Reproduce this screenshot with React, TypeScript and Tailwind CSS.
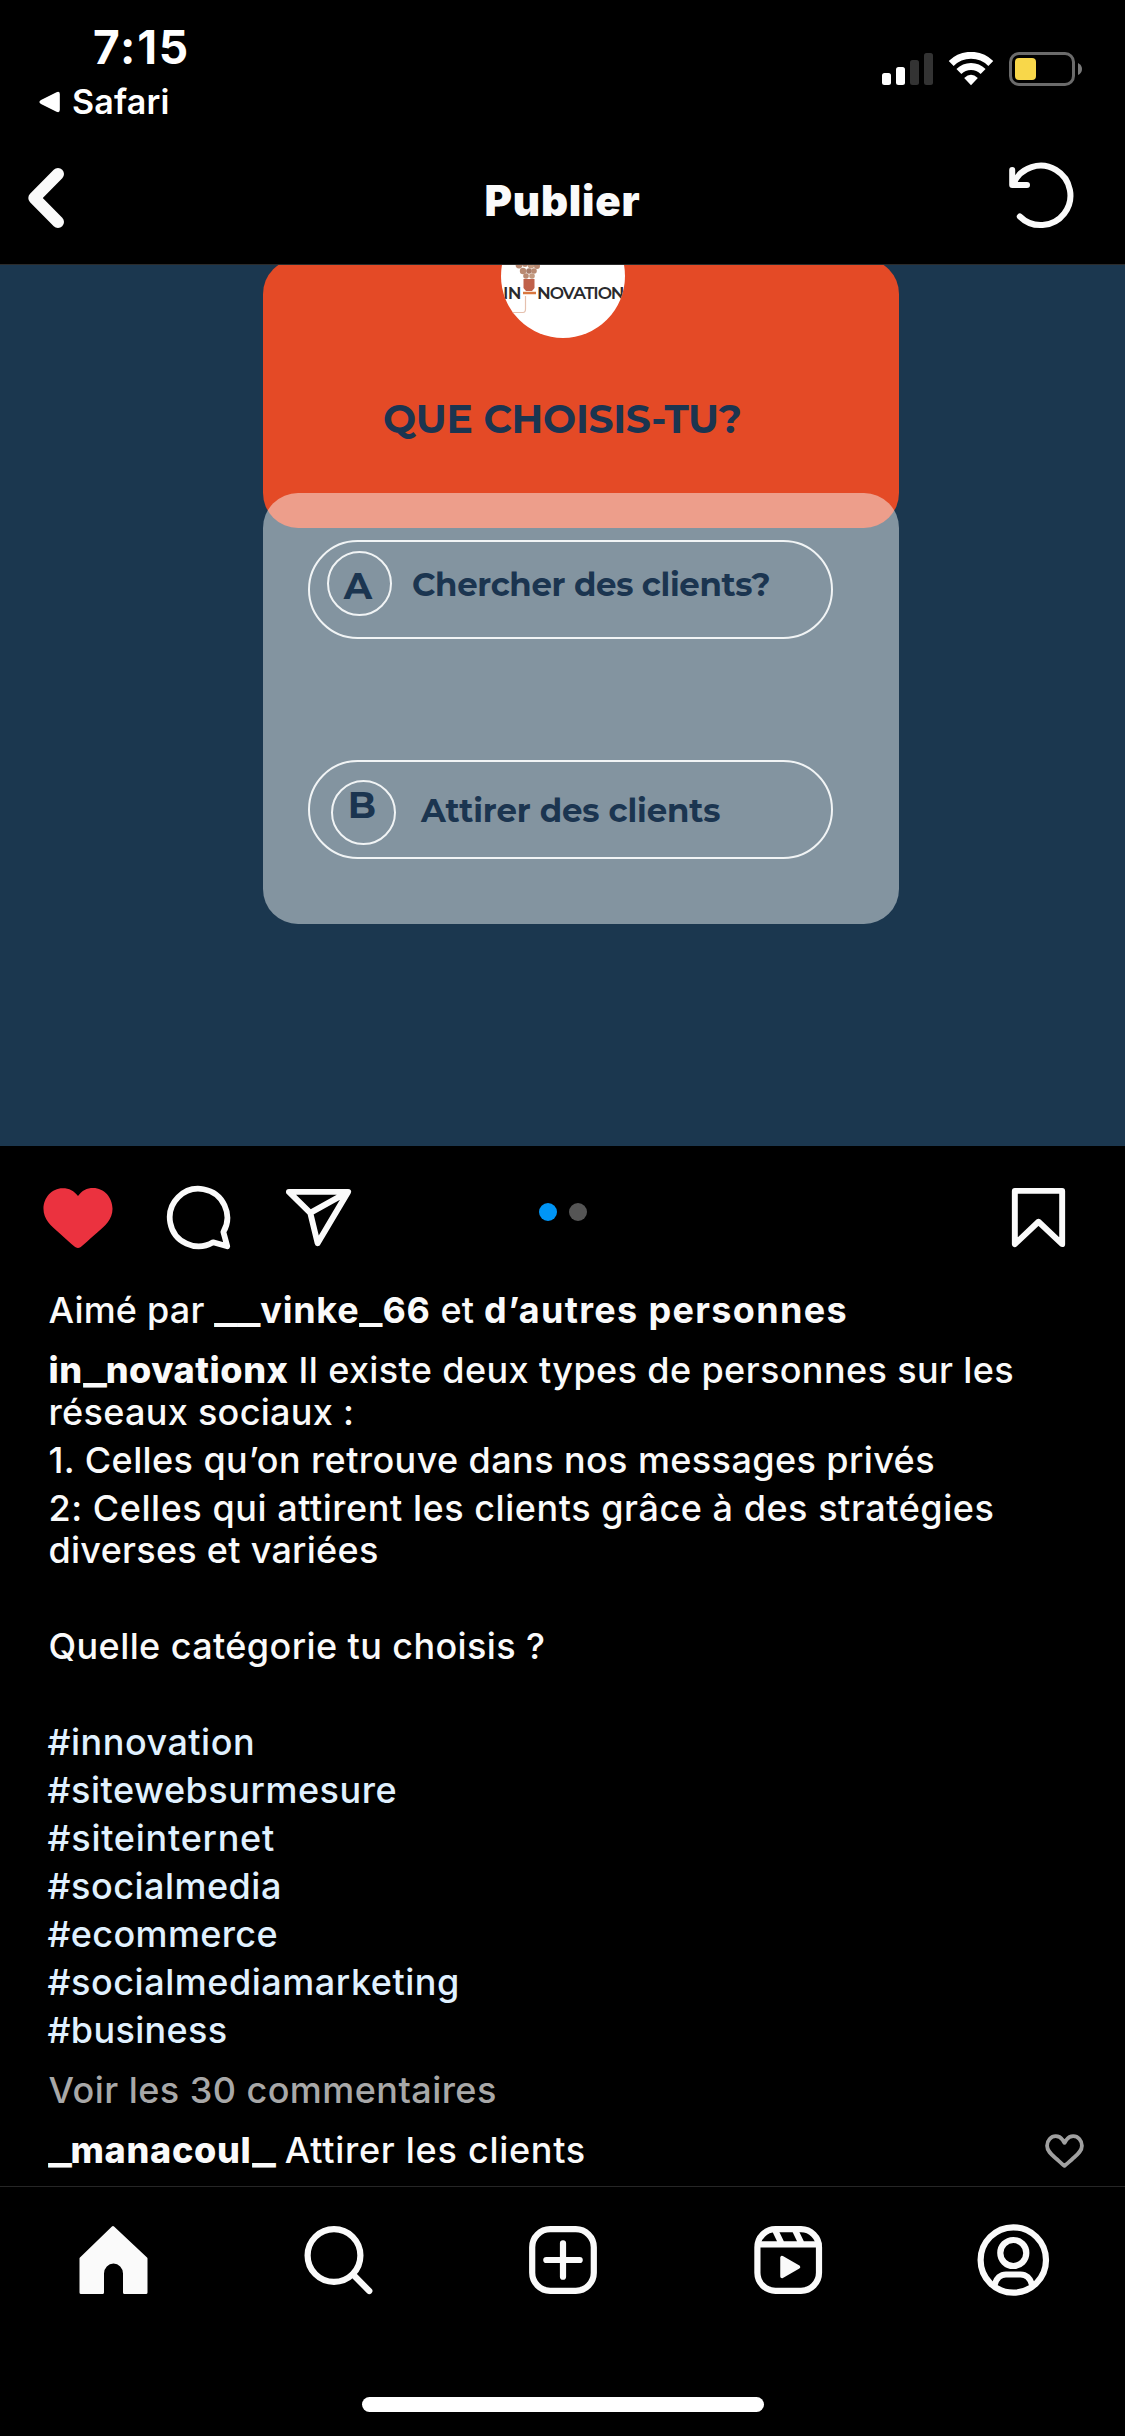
import type { ReactNode } from "react";

function StatusBar() {
  return (
    <div className="flex h-[135px] items-start justify-between pl-[39px] pr-[43px]">
      <div className="pt-[23px]">
        <div className="ml-[54px] w-fit text-[46px] font-bold leading-[48px] tracking-[1.8px] text-white">7:15</div>
        <div className="mt-[11px] flex items-center">
          <svg width="21" height="22" viewBox="0 0 21 22" fill="#fff">
            <path d="M2 9 17.5 1.2Q20.8 0 20.8 3V19Q20.8 22 17.5 20.8L2 13Q-1.2 11 2 9Z" />
          </svg>
          <span className="ml-[12px] text-[34px] font-semibold leading-[40px] tracking-[0.2px] text-white">Safari</span>
        </div>
      </div>
      <div className="flex items-end pt-[52px]">
        <svg width="51" height="34" viewBox="0 0 51 34">
          <rect x="0" y="21" width="9" height="12" rx="2.5" fill="#fff" />
          <rect x="14" y="15" width="9" height="18" rx="2.5" fill="#fff" />
          <rect x="28" y="8" width="9" height="25" rx="2.5" fill="#333" />
          <rect x="42" y="1" width="9" height="32" rx="2.5" fill="#333" />
        </svg>
        <svg className="ml-[15px]" width="46" height="34" viewBox="948 52 46 34" fill="none" stroke="#fff">
          <path d="M951.2 63.5A28.1 28.1 0 0 1 990.8 63.5" strokeWidth="7" />
          <path d="M958.9 71.5A17.1 17.1 0 0 1 983.1 71.5" strokeWidth="7" />
          <path d="M971 85.2 964.2 78Q971 71.6 977.8 78Z" fill="#fff" stroke="none" />
        </svg>
        <svg className="ml-[15px]" width="73" height="34" viewBox="0 0 73 34">
          <rect x="1.5" y="1.5" width="63" height="31" rx="8.5" fill="none" stroke="#6b6b6b" strokeWidth="3" />
          <rect x="6" y="6" width="21" height="22" rx="4" fill="#f8d74a" />
          <path d="M69 11Q73 13 73 17T69 23Z" fill="#7a7a7a" />
        </svg>
      </div>
    </div>
  );
}

function Header() {
  return (
    <header className="grid h-[130px] grid-cols-3 items-start border-b border-[#2b2b2b]">
      <svg className="ml-[26px] mt-[31px]" width="40" height="64" viewBox="0 0 40 64" fill="none" stroke="#fafafa" strokeWidth="12" strokeLinecap="round" strokeLinejoin="round">
        <path d="M32 8 8.3 32 32 56" />
      </svg>
      <h1 className="mt-[42px] justify-self-center text-[42px] font-black leading-[48px] tracking-[0.8px] text-[#fafafa]">Publier</h1>
      <svg className="mr-[49px] mt-[27px] justify-self-end" width="68" height="68" viewBox="1008 162 68 68" fill="none" stroke="#fafafa" strokeWidth="6" strokeLinecap="round" strokeLinejoin="round">
        <path d="M1012.2 170V185H1027" />
        <path d="M1013.5 183.5A29.7 29.7 0 1 1 1019.8 216.5" />
      </svg>
    </header>
  );
}

function Answer({ label, text, pill, badge, letter, copy }: { label: string; text: string; pill: string; badge: string; letter: string; copy: string }) {
  return (
    <div className={`flex h-[99px] w-[525px] items-start rounded-full border-2 border-[#f1f4f5] ${pill}`}>
      <div className={`flex size-[65px] shrink-0 justify-center rounded-full border-2 border-[#f1f4f5] ${badge}`}>
        <span className={`text-[37px] font-bold leading-[40px] ${letter}`}>{label}</span>
      </div>
      <span className={`whitespace-nowrap text-[32.4px] font-[750] leading-[40px] ${copy}`}>{text}</span>
    </div>
  );
}

function Logo() {
  return (
    <div className="absolute left-[238px] top-[-45px] size-[124px] overflow-hidden rounded-full bg-white text-[#2a2a2c]">
      <svg className="absolute left-0 top-0" width="124" height="124" viewBox="0 0 124 124">
        <g fill="#b98a72">
          <circle cx="18" cy="51" r="3.4" />
          <circle cx="24" cy="50" r="3" />
          <circle cx="30" cy="51" r="3.4" fill="#c39a80" />
          <circle cx="36" cy="52" r="3" />
          <circle cx="22" cy="57" r="3.2" />
          <circle cx="28" cy="57" r="2.8" fill="#a87b68" />
          <circle cx="33" cy="57" r="2.8" />
          <circle cx="25" cy="62" r="2.8" />
          <circle cx="31" cy="62" r="2.8" fill="#c39a80" />
        </g>
        <path d="M22.500 65H33.500V74L31 77H25L22.500 74Z" fill="#c0614a" />
        <path d="M22 79H35" stroke="#d9773f" strokeWidth="2.4" />
        <path d="M0 98.5H22Q24.500 98.500 24.500 95V82" fill="none" stroke="#e5c0ae" strokeWidth="1.2" />
      </svg>
      <div className="relative flex pt-[69px] text-[17px] font-semibold leading-[20px]">
        <span className="ml-[2px] tracking-[-0.6px]">IN</span>
        <span className="absolute left-[36px] tracking-[-1.1px]">NOVATION</span>
      </div>
    </div>
  );
}

function Media() {
  return (
    <section className="h-[881px] overflow-hidden bg-[#1b374f] pl-[263px] font-['Montserrat','Inter',sans-serif] text-[#1b3550]">
      <div className="relative -mt-[6px] h-[269px] w-[636px] rounded-[35px] bg-[#e44a26]">
        <Logo />
        <h2 className="ml-[120px] w-fit whitespace-nowrap pt-[136px] text-[39.3px] font-[750] leading-[48px] tracking-[-0.3px]">QUE CHOISIS-TU?</h2>
      </div>
      <div className="relative -mt-[35px] flex h-[431px] w-[636px] flex-col rounded-[35px] bg-[#f6fbfb79] pl-[45px] pt-[47px]">
        <Answer label="A" text="Chercher des clients?" pill="" badge="ml-[17px] mt-[9px]" letter="mt-[13px] -ml-[3px]" copy="ml-[20px] mt-[23px] tracking-[-0.35px]" />
        <Answer label="B" text="Attirer des clients" pill="mt-[121px]" badge="ml-[21px] mt-[18px]" letter="mt-[3px] -ml-[3px]" copy="ml-[25px] mt-[29px] tracking-[-0.1px]" />
      </div>
    </section>
  );
}

function Actions() {
  return (
    <div className="relative flex h-[143px] items-start pl-[43px] pr-[51px] pt-[36px]">
      <svg className="mt-[6px]" width="70" height="60" viewBox="0 3.1 48 41.7" fill="#eb323f">
        <path d="M34.6 3.1c-4.5 0-7.9 1.8-10.6 5.6-2.7-3.7-6.1-5.5-10.6-5.5C6 3.1 0 9.6 0 17.6c0 7.3 5.4 12 10.6 16.5.6.5 1.3 1.1 1.9 1.7l2.3 2c4.4 3.9 6.6 5.9 7.6 6.5.5.3 1.1.5 1.6.5s1.1-.2 1.6-.5c1-.6 2.8-2.2 7.8-6.8l2-1.8c.7-.6 1.3-1.2 2-1.7C42.7 29.6 48 25 48 17.6c0-8-6-14.5-13.4-14.5z" />
      </svg>
      <svg className="ml-[51px] mt-[1px]" width="69" height="69" viewBox="0 0 24 24" fill="none" stroke="#fafafa" strokeWidth="2" strokeLinejoin="round">
        <path d="M20.656 17.008a9.993 9.993 0 1 0-3.59 3.615L22 22Z" />
      </svg>
      <svg className="ml-[50px] mt-[1px]" width="71" height="71" viewBox="0 0 24 24" fill="none" stroke="#fafafa" strokeWidth="2" strokeLinejoin="round">
        <path d="M22 3 9.218 10.083M11.698 20.334 22 3.001H2L9.218 10.084Z" />
      </svg>
      <svg className="ml-auto" width="71" height="71" viewBox="0 0 24 24" fill="none" stroke="#fafafa" strokeWidth="2" strokeLinejoin="round">
        <path d="M20 21 12 13.44 4 21V3H20Z" />
      </svg>
      <div className="absolute left-[538.5px] top-[57px] flex gap-[12px]">
        <span className="size-[18px] rounded-full bg-[#0095f6]" />
        <span className="size-[18px] rounded-full bg-[#555]" />
      </div>
    </div>
  );
}

/* Wide underscore, as drawn in account names. */
function U() {
  return (
    <span className="inline-block w-[23px] tracking-normal">
      <span className="inline-block origin-left scale-x-[1.37]">_</span>
    </span>
  );
}

const hashtags = [
  { tag: "#innovation", spacing: "tracking-[0.5px]" },
  { tag: "#sitewebsurmesure", spacing: "tracking-[0.54px]" },
  { tag: "#siteinternet", spacing: "tracking-[0.75px]" },
  { tag: "#socialmedia", spacing: "tracking-[0.5px]" },
  { tag: "#ecommerce", spacing: "tracking-[0.35px]" },
  { tag: "#socialmediamarketing", spacing: "tracking-[0.54px]" },
  { tag: "#business", spacing: "tracking-[0.35px]" },
];

function Caption() {
  return (
    <div className="h-[897px] whitespace-nowrap pl-[48.5px] text-[36px] font-medium leading-[42px] text-[#fafafa]">
      <p className="mb-[18px] tracking-[0.2px]">
        Aimé par{" "}
        <span className="font-[750] tracking-[0.75px]"><U /><U />vinke<U />66</span>
        {" "}et{" "}
        <span className="font-[750] tracking-[1.35px]">d’autres personnes</span>
      </p>
      <p className="mb-[6px] tracking-[0.38px]">
        <span className="font-extrabold tracking-[0.55px]">in<U />novationx</span>
        {" "}Il existe deux types de personnes sur les
        <br />
        <span className="tracking-[0.3px]">réseaux sociaux :</span>
      </p>
      <p className="mb-[6px] tracking-[0.4px]">1. Celles qu’on retrouve dans nos messages privés</p>
      <p className="mb-[54px] tracking-[0.54px]">
        2: Celles qui attirent les clients grâce à des stratégies
        <br />
        <span className="tracking-[0.27px]">diverses et variées</span>
      </p>
      <p className="mb-[54px] tracking-[0.4px]">Quelle catégorie tu choisis ?</p>
      <ul className="-ml-px flex flex-col gap-[6px] text-[#e0f1ff]">
        {hashtags.map(({ tag, spacing }) => (
          <li key={tag} className={spacing}>{tag}</li>
        ))}
      </ul>
      <p className="mt-[18px] tracking-[0.45px] text-[#a8a8a8]">Voir les 30 commentaires</p>
      <div className="-ml-px mt-[18px] flex items-start justify-between pr-[41px]">
        <p className="tracking-[0.72px]">
          <span className="font-extrabold tracking-[0.7px]"><U />manacoul<U /></span>
          {" "}Attirer les clients
        </p>
        <svg className="mt-[5px]" width="39" height="34" viewBox="0.5 3.5 47 41" fill="none" stroke="#a0a0a0" strokeWidth="4.6" strokeLinejoin="round">
          <path d="M34.6 6.1c5.7 0 10.4 5.2 10.4 11.5 0 6.8-5.9 11-11.5 16S25 41.3 24 41.9c-1.1-.7-4.7-4-9.5-8.3-5.7-5-11.5-9.2-11.5-16C3 11.3 7.7 6.1 13.4 6.1c4.2 0 6.5 2 8.1 4.3 1.9 2.6 2.2 3.9 2.5 3.9.3 0 .6-1.3 2.5-3.9 1.6-2.3 3.9-4.3 8.1-4.3Z" />
        </svg>
      </div>
    </div>
  );
}

function TabIcon({ children }: { children: ReactNode }) {
  return (
    <svg className="justify-self-center" width="76" height="76" viewBox="0 0 76 76" fill="none" stroke="#fafafa" strokeWidth="6.2" strokeLinecap="round" strokeLinejoin="round">
      {children}
    </svg>
  );
}

function TabBar() {
  return (
    <nav className="grid h-[250px] grid-cols-5 grid-rows-[76px_1fr] border-t border-[#262626] pt-[35px]">
      <TabIcon>
        <path d="M38 5.5 71 36.5V70.5H49.5V51.5A11 11.5 0 0 0 27.5 51.5V70.5H6V36.5Z" fill="#fafafa" strokeWidth="3" />
      </TabIcon>
      <TabIcon>
        <circle cx="34" cy="33.5" r="26.4" />
        <path d="M53 52.5 69.3 69" />
      </TabIcon>
      <TabIcon>
        <rect x="7.2" y="7.2" width="61.6" height="61.6" rx="18" />
        <path d="M21.3 38H54.700M38 21.300V54.700" />
      </TabIcon>
      <TabIcon>
        <rect x="7.4" y="7.2" width="61.6" height="61.6" rx="18" />
        <path d="M8 22.4H68.5M25 8 31.5 21.5M45 8 51.5 21.5" />
        <path d="M32 35.5V54.5L48.5 45Z" fill="#fafafa" strokeWidth="3.5" />
      </TabIcon>
      <TabIcon>
        <circle cx="38.3" cy="38" r="32.7" />
        <circle cx="38.3" cy="31" r="13" />
        <path d="M19.8 62C21.5 56.5 25.5 52.5 31 52.5H45.6C51.1 52.5 55.1 56.5 56.8 62" />
      </TabIcon>
      <div className="col-span-5 mx-auto mt-[99px] h-[15px] w-[402px] rounded-full bg-white" />
    </nav>
  );
}

export default function App() {
  return (
    <div className="h-[2436px] w-[1125px] overflow-hidden bg-black font-['Inter',sans-serif]">
      <StatusBar />
      <Header />
      <Media />
      <Actions />
      <Caption />
      <TabBar />
    </div>
  );
}
